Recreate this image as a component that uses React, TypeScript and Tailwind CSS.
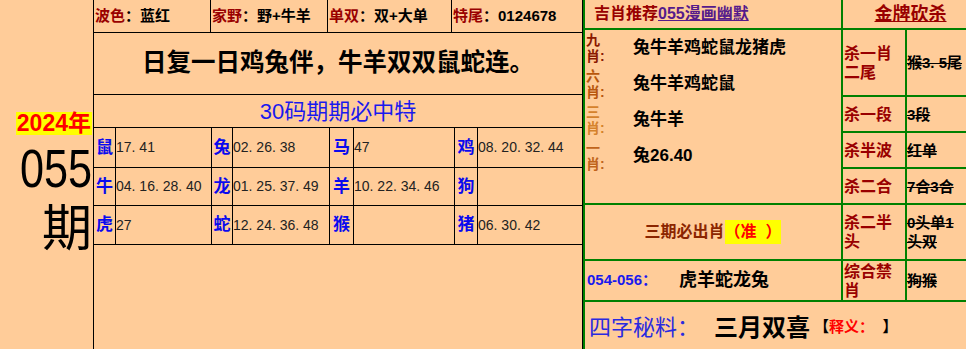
const TOP = [
  { k: '波色', v: '蓝红', w: 'w-[117px]' },
  { k: '家野', v: '野+牛羊', w: 'w-[117px]' },
  { k: '单双', v: '双+大单', w: 'w-[124px]' },
  { k: '特尾', v: '0124678', w: 'flex-1' },
];

const GRID_ROWS = [
  { h: 'h-[40px]', cells: [['鼠', '17. 41'], ['兔', '02. 26. 38'], ['马', '47'], ['鸡', '08. 20. 32. 44']] },
  { h: 'h-[38px]', cells: [['牛', '04. 16. 28. 40'], ['龙', '01. 25. 37. 49'], ['羊', '10. 22. 34. 46'], ['狗', '']] },
  { h: 'h-[39px]', cells: [['虎', '27'], ['蛇', '12. 24. 36. 48'], ['猴', ''], ['猪', '06. 30. 42']] },
];

// zodiac col width / numbers col width, per column pair
const COLS = [
  ['w-[22px]', 'w-[95px]'],
  ['w-[21px]', 'w-[96px]'],
  ['w-[24px]', 'w-[100px]'],
  ['w-[23px]', 'flex-1'],
];

const PICKS = [
  { n: '九', c: 'text-[#8b1a00]', v: '兔牛羊鸡蛇鼠龙猪虎' },
  { n: '六', c: 'text-[#b8560c]', v: '兔牛羊鸡蛇鼠' },
  { n: '三', c: 'text-[#d5822c]', v: '兔牛羊' },
  { n: '一', c: 'text-[#c0641c]', v: '兔26.40' },
];

function KillLabel({ children, row }: { children: React.ReactNode; row: string }) {
  return (
    <div className={`${row} col-start-2 bg-[#ffcc99] flex items-center pl-[1px] text-[16px] leading-[19px] font-bold text-[#990000]`}>
      <span>{children}</span>
    </div>
  );
}

function KillValue({ children, row }: { children: React.ReactNode; row: string }) {
  return (
    <div className={`${row} col-start-3 bg-[#ffcc99] flex items-center overflow-hidden text-[15px] leading-[19px] font-bold text-black`}>
      <span className="line-through decoration-black">{children}</span>
    </div>
  );
}

export default function App() {
  return (
    <div className="w-[966px] h-[349px] overflow-hidden flex bg-[#ffcc99] font-['Liberation_Sans','Noto_Sans_CJK_SC',sans-serif]">
      {/* left: issue number */}
      <div className="w-[94px] shrink-0 border-r border-black flex flex-col items-end justify-center pt-[12px] pr-[1px]">
        <span className="bg-[#ffff00] text-[#ff0000] font-bold text-[23px] leading-[23px] px-[1px]">2024年</span>
        <span className="text-[54px] leading-[44px] text-black mt-[11px] scale-x-[0.8] origin-right">055</span>
        <span className="font-['Noto_Sans_CJK_SC',sans-serif] text-[50px] leading-[52px] text-black mt-[8px]">期</span>
      </div>

      {/* middle table */}
      <div className="w-[489px] shrink-0 border-r border-black flex flex-col">
        <div className="h-[33px] shrink-0 border-b border-black flex">
          {TOP.map((t, i) => (
            <div key={t.k} className={`${t.w} ${i < 3 ? 'border-r border-black' : ''} flex items-center pl-[1px] text-[15px] font-bold whitespace-nowrap`}>
              <span className="text-[#990000]">{t.k}</span>
              <span className="text-black">：{t.v}</span>
            </div>
          ))}
        </div>
        <div className="h-[62px] shrink-0 border-b border-black flex items-center justify-center text-[24.5px] font-bold text-black">
          日复一日鸡兔伴，牛羊双双鼠蛇连。
        </div>
        <div className="h-[33px] shrink-0 border-b border-black flex items-center justify-center text-[22px] text-[#1a1aee]">
          30码期期必中特
        </div>
        {GRID_ROWS.map((r, ri) => (
          <div key={ri} className={`${r.h} shrink-0 border-b border-black flex`}>
            {r.cells.map(([z, n], ci) => (
              <div key={z} className={`${ci < 3 ? 'w-auto' : 'flex-1'} flex ${ci < 3 ? 'border-r border-black' : ''}`}>
                <div className={`${COLS[ci][0]} shrink-0 border-r border-black flex items-center justify-center text-[17px] font-bold text-[#0a0aee]`}>{z}</div>
                <div className={`${COLS[ci][1]} ${ci < 3 ? 'shrink-0' : ''} flex items-center text-[14px] text-[#222] whitespace-nowrap`}>{n}</div>
              </div>
            ))}
          </div>
        ))}
        <div className="flex-1" />
      </div>

      {/* right: picks + kills */}
      <div className="flex-1 border-l-2 border-[#008000] bg-[#008000] grid grid-cols-[256px_62px_1fr] grid-rows-[28px_65px_34px_34px_34px_54px_39px_1fr] gap-[2px]">
        <div className="bg-[#ffcc99] flex items-center pl-[9px] text-[16px] font-bold whitespace-nowrap">
          <span className="text-[#990000]">吉肖推荐</span>
          <span className="text-[#551a8b] underline">055漫画幽默</span>
        </div>
        <div className="col-span-2 bg-[#ffcc99] flex items-center justify-center pl-[12px] text-[18px] font-bold text-[#990000] underline">
          金牌砍杀
        </div>

        <div className="row-start-2 row-span-4 col-start-1 bg-[#ffcc99] flex flex-col pl-[1px]">
          {PICKS.map(p => (
            <div key={p.n} className="h-[36px] flex items-center">
              <div className={`w-[20px] shrink-0 text-[14px] leading-[16px] font-bold ${p.c}`}>{p.n}肖:</div>
              <div className="ml-[27px] text-[17px] font-bold text-black whitespace-nowrap">{p.v}</div>
            </div>
          ))}
        </div>

        <KillLabel row="row-start-2">杀一肖二尾</KillLabel>
        <KillValue row="row-start-2"><span className="whitespace-nowrap">猴3. 5尾</span></KillValue>
        <KillLabel row="row-start-3">杀一段</KillLabel>
        <KillValue row="row-start-3">3段</KillValue>
        <KillLabel row="row-start-4">杀半波</KillLabel>
        <KillValue row="row-start-4">红单</KillValue>
        <KillLabel row="row-start-5">杀二合</KillLabel>
        <KillValue row="row-start-5">7合3合</KillValue>

        <div className="row-start-6 col-start-1 bg-[#ffcc99] flex items-center justify-center text-[16px] font-bold">
          <span className="text-[#8b2500]">三期必出肖</span>
          <span className="bg-[#ffff00] text-[#ff0000]">（准&nbsp;&nbsp;）</span>
        </div>
        <KillLabel row="row-start-6">杀二半头</KillLabel>
        <KillValue row="row-start-6">0头单1头双</KillValue>

        <div className="row-start-7 col-start-1 bg-[#ffcc99] flex items-center pl-[2px] font-bold whitespace-nowrap">
          <span className="text-[15px] text-[#1a1aee]">054-056：</span>
          <span className="ml-[22px] text-[18px] text-black">虎羊蛇龙兔</span>
        </div>
        <KillLabel row="row-start-7">综合禁肖</KillLabel>
        <KillValue row="row-start-7">狗猴</KillValue>

        <div className="row-start-8 col-span-3 bg-[#ffcc99] flex items-center pl-[4px] pt-[4px] whitespace-nowrap">
          <span className="text-[22px] text-[#2a2ae0]">四字秘料：</span>
          <span className="ml-[15px] text-[24px] font-bold text-black">三月双喜</span>
          <span className="ml-[4px] text-[15px] font-bold text-black">【<span className="text-[#ff0000]">释义：</span>&nbsp;&nbsp;】</span>
        </div>
      </div>
    </div>
  );
}
